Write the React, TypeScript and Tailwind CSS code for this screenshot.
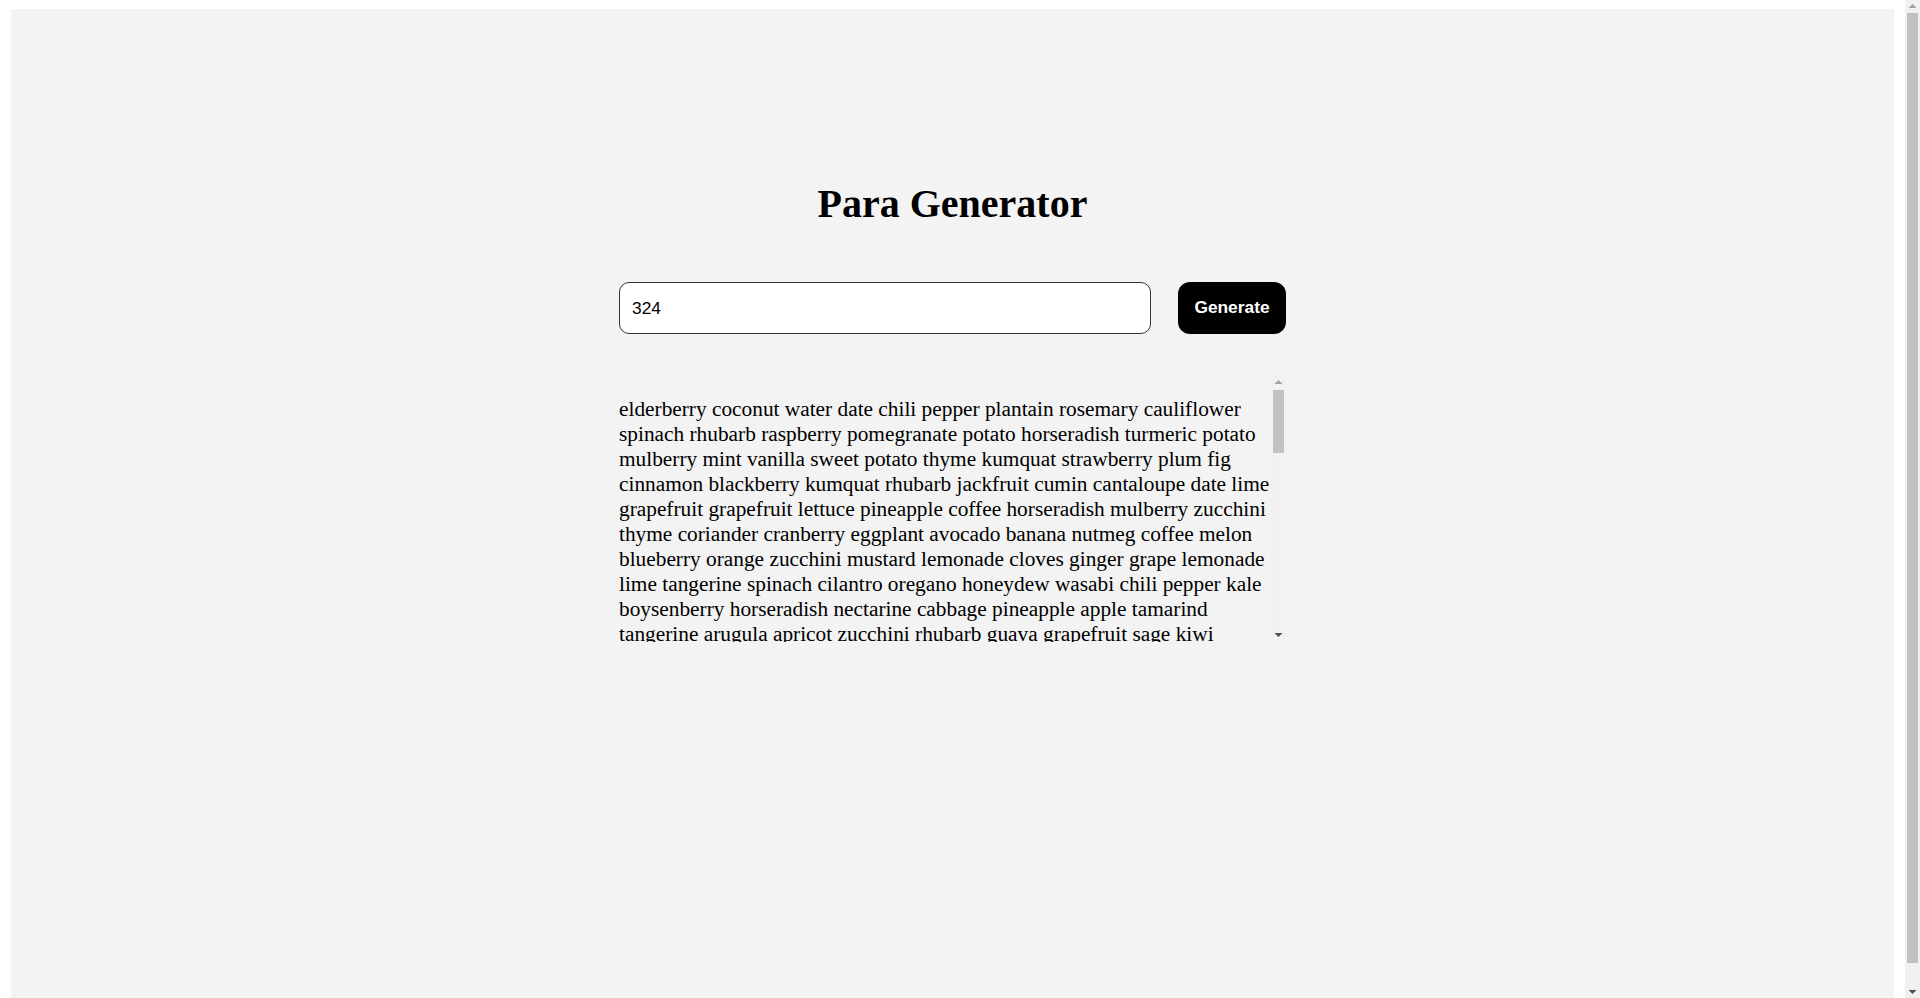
import { useState } from "react";

// 表示されている先頭部分（スクリーンショットと同じ並び）
const LEAD = [
  "elderberry", "coconut water", "date", "chili pepper", "plantain", "rosemary", "cauliflower",
  "spinach", "rhubarb", "raspberry", "pomegranate", "potato", "horseradish", "turmeric", "potato",
  "mulberry", "mint", "vanilla", "sweet potato", "thyme", "kumquat", "strawberry", "plum", "fig",
  "cinnamon", "blackberry", "kumquat", "rhubarb", "jackfruit", "cumin", "cantaloupe", "date", "lime",
  "grapefruit", "grapefruit", "lettuce", "pineapple", "coffee", "horseradish", "mulberry", "zucchini",
  "thyme", "coriander", "cranberry", "eggplant", "avocado", "banana", "nutmeg", "coffee", "melon",
  "blueberry", "orange", "zucchini", "mustard", "lemonade", "cloves", "ginger", "grape", "lemonade",
  "lime", "tangerine", "spinach", "cilantro", "oregano", "honeydew", "wasabi", "chili pepper", "kale",
  "boysenberry", "horseradish", "nectarine", "cabbage", "pineapple", "apple", "tamarind",
  "tangerine", "arugula", "apricot", "zucchini", "rhubarb", "guava", "grapefruit", "sage", "kiwi",
];

const POOL = [
  "apple", "apricot", "arugula", "avocado", "banana", "basil", "blackberry", "blueberry", "boysenberry",
  "cabbage", "cantaloupe", "carrot", "cauliflower", "celery", "cherry", "chili pepper", "cilantro",
  "cinnamon", "cloves", "coconut water", "coffee", "coriander", "cranberry", "cumin", "date", "dill",
  "eggplant", "elderberry", "fig", "garlic", "ginger", "grape", "grapefruit", "guava", "honeydew",
  "horseradish", "jackfruit", "kale", "kiwi", "kumquat", "lemon", "lemonade", "lettuce", "lime", "mango",
  "melon", "mint", "mulberry", "mustard", "nectarine", "nutmeg", "onion", "orange", "oregano", "papaya",
  "parsley", "peach", "pear", "pineapple", "plantain", "plum", "pomegranate", "potato", "radish",
  "raspberry", "rhubarb", "rosemary", "sage", "spinach", "strawberry", "sweet potato", "tamarind",
  "tangerine", "thyme", "tomato", "turmeric", "vanilla", "wasabi", "watermelon", "zucchini",
];

// 固定シードで残りの単語を生成
const buildPara = (count: number): string => {
  const words = [...LEAD];
  let seed = 324;
  while (words.length < count) {
    seed = (seed * 1103515245 + 12345) % 2147483648;
    words.push(POOL[seed % POOL.length]);
  }
  return words.join(" ");
};

// スクロールバーの矢印
const Arrow = ({ up, color }: { up?: boolean; color: string }) => (
  <svg width="15" height="13" viewBox="0 0 15 13" aria-hidden="true">
    {up ? <polygon points="3.5,8 11.5,8 7.5,4" fill={color} /> : <polygon points="3.5,5 11.5,5 7.5,9" fill={color} />}
  </svg>
);

export default function App() {
  const [count, setCount] = useState("324");
  const [para, setPara] = useState(() => buildPara(324));

  const handleGenerate = () => {
    const n = parseInt(count, 10);
    if (!Number.isNaN(n) && n > 0) setPara(buildPara(n));
  };

  return (
    <div className="h-screen flex bg-white overflow-hidden">
      {/* ページ本体 */}
      <div className="flex-1 overflow-y-auto">
        <div className="pt-[9px] px-[11px] pb-[14px]">
          <div className="h-[998px] bg-[#f3f3f3] flex flex-col items-center pt-[172px]">
            {/* タイトル */}
            <h1 className="text-[40px] leading-[46px] font-bold text-black font-['Liberation_Serif',serif]">
              Para Generator
            </h1>

            {/* 入力行 */}
            <div className="w-[667px] mt-[55px] flex items-center gap-[27px]">
              <input
                type="text"
                value={count}
                onChange={(e) => setCount(e.target.value)}
                className="flex-1 h-[52px] px-3 rounded-[10px] border border-[#333] bg-white text-[17.33px] text-black font-['Liberation_Sans',sans-serif] outline-none"
              />
              <button
                type="button"
                onClick={handleGenerate}
                className="h-[52px] w-[108px] rounded-[12px] bg-black text-white text-[17.33px] font-bold font-['Liberation_Sans',sans-serif]"
              >
                Generate
              </button>
            </div>

            {/* 段落 */}
            <div className="w-[667px] h-[267px] mt-[41px] flex">
              <div className="flex-1 overflow-y-auto">
                <p className="mt-[22px] text-[21.33px] leading-[25px] text-black font-['Liberation_Serif',serif]">
                  {para}
                </p>
              </div>
              <div className="w-[15px] flex flex-col bg-[#f1f1f1]">
                <div className="h-[15px] flex items-center">
                  <Arrow up color="#a3a3a3" />
                </div>
                <div className="flex-1 px-[2px]">
                  <div className="h-[63px] bg-[#c1c1c1]" />
                </div>
                <div className="h-[15px] flex items-center">
                  <Arrow color="#505050" />
                </div>
              </div>
            </div>
          </div>
        </div>
      </div>

      {/* ページのスクロールバー */}
      <div className="w-[15px] flex flex-col bg-[#f1f1f1]">
        <div className="h-[13px]">
          <Arrow up color="#a3a3a3" />
        </div>
        <div className="flex-1 px-[2px]">
          <div className="h-[950px] bg-[#c1c1c1]" />
        </div>
        <div className="h-[13px]">
          <Arrow color="#505050" />
        </div>
      </div>
    </div>
  );
}
